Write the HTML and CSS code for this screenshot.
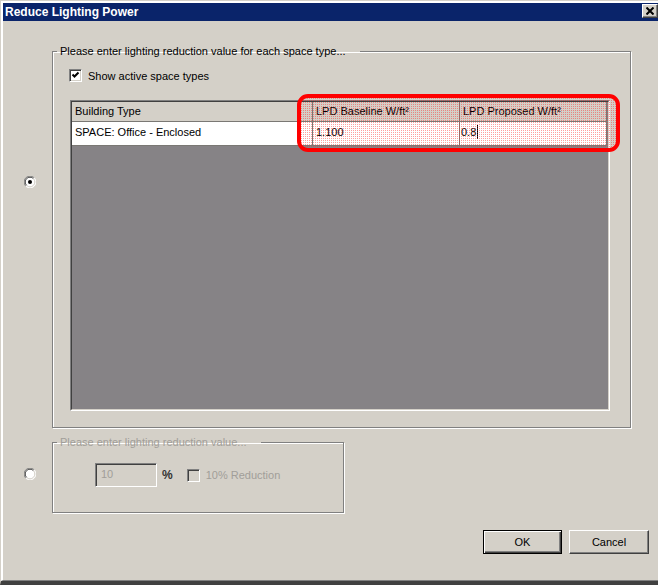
FILE: index.html
```html
<!DOCTYPE html>
<html>
<head>
<meta charset="utf-8">
<title>Reduce Lighting Power</title>
<link rel="stylesheet" href="styles.css">
</head>
<body>
<div class="window">
  <div class="frame">
    <div class="titlebar">
      <span class="title">Reduce Lighting Power</span>
      <span class="close"><svg width="8" height="8" viewBox="0 0 8 8"><path d="M0.5 0.5 L7.5 7.5 M7.5 0.5 L0.5 7.5" stroke="#000" stroke-width="2" fill="none"/></svg></span>
    </div>
    <div class="client">
      <div class="option-row">
        <span class="radio radio-a"><svg width="12" height="12" viewBox="0 0 12 12"><circle cx="6" cy="6" r="5.5" fill="#fff"/><path d="M1.8 10.2 A5.5 5.5 0 0 1 10.2 1.8" stroke="#808080" stroke-width="1" fill="none"/><path d="M2.6 9.4 A4.6 4.6 0 0 1 9.4 2.6" stroke="#404040" stroke-width="1" fill="none"/><path d="M10.2 1.8 A5.5 5.5 0 0 1 1.8 10.2" stroke="#fff" stroke-width="1" fill="none"/><path d="M9.4 2.6 A4.6 4.6 0 0 1 2.6 9.4" stroke="#d4d0c8" stroke-width="1" fill="none"/><circle cx="6" cy="6" r="2" fill="#000"/></svg></span>
        <fieldset class="group group-a">
          <legend class="legend-a">Please enter lighting reduction value for each space type...</legend>
          <div class="check-row">
            <span class="checkbox"><svg width="9" height="9" viewBox="0 0 9 9"><path d="M1.5 3.5 L3.5 5.5 L7.5 1.5" stroke="#000" stroke-width="2" fill="none"/></svg></span>
            <span class="check-label">Show active space types</span>
          </div>
          <div class="grid">
            <div class="grid-inner">
              <div class="grid-row head">
                <div class="cell c1">Building Type</div>
                <div class="cell c2">LPD Baseline W/ft²</div>
                <div class="cell c3">LPD Proposed W/ft²</div>
              </div>
              <div class="grid-row data">
                <div class="cell c1">SPACE: Office - Enclosed</div>
                <div class="cell c2">1.100</div>
                <div class="cell c3 editing">0.8<span class="caret"></span></div>
              </div>
            </div>
          </div>
        </fieldset>
      </div>
      <div class="option-row row-b">
        <span class="radio radio-b"><svg width="12" height="12" viewBox="0 0 12 12"><circle cx="6" cy="6" r="5.5" fill="#fff"/><path d="M1.8 10.2 A5.5 5.5 0 0 1 10.2 1.8" stroke="#808080" stroke-width="1" fill="none"/><path d="M2.6 9.4 A4.6 4.6 0 0 1 9.4 2.6" stroke="#404040" stroke-width="1" fill="none"/><path d="M10.2 1.8 A5.5 5.5 0 0 1 1.8 10.2" stroke="#fff" stroke-width="1" fill="none"/><path d="M9.4 2.6 A4.6 4.6 0 0 1 2.6 9.4" stroke="#d4d0c8" stroke-width="1" fill="none"/></svg></span>
        <fieldset class="group group-b">
          <legend class="legend-b">Please enter lighting reduction value...</legend>
          <div class="value-row">
            <span class="textbox">10</span>
            <span class="percent">%</span>
            <span class="checkbox disabled"></span>
            <span class="disabled-label">10% Reduction</span>
          </div>
        </fieldset>
      </div>
      <div class="buttons">
        <span class="btn btn-default">OK</span>
        <span class="btn btn-cancel">Cancel</span>
      </div>
    </div>
  </div>
  <div class="highlight"></div>
</div>
</body>
</html>
```
FILE: styles.css
```css
html, body {
  margin: 0;
  background: #d4d0c8;
}
body {
  font-family: "Liberation Sans", Arial, sans-serif;
  font-size: 11px;
  color: #000;
}
.window {
  position: relative;
  width: 658px;
  height: 585px;
  box-sizing: border-box;
  border-top: 1px solid #d4d0c8;
  border-left: 1px solid #d4d0c8;
  border-bottom: 4px solid #404040;
  display: flex;
  flex-direction: column;
  overflow: hidden;
  background: #d4d0c8;
}
.frame {
  flex: 1;
  min-height: 0;
  display: flex;
  flex-direction: column;
  border-top: 2px solid #fff;
  border-left: 2px solid #fff;
  border-bottom: 1px solid #808080;
}
.titlebar {
  height: 18px;
  flex: none;
  background: #0a246a;
  color: #fff;
  display: flex;
  justify-content: space-between;
  align-items: flex-start;
  padding-left: 2px;
  font: bold 12px/18px "Liberation Sans", Arial, sans-serif;
}
.close {
  margin-top: 1px;
  width: 16px;
  height: 14px;
  box-sizing: border-box;
  background: #d4d0c8;
  border-top: 1px solid #fff;
  border-left: 1px solid #fff;
  border-right: 1px solid #404040;
  border-bottom: 1px solid #404040;
  box-shadow: inset -1px -1px 0 #808080;
  display: flex;
  align-items: center;
  justify-content: center;
}
.close svg {
  display: block;
}
.client {
  flex: 1;
  display: flex;
  flex-direction: column;
  padding: 24px 9px 0 0;
}
.option-row {
  display: grid;
  grid-template-columns: 49px auto;
  align-items: start;
}
.row-b {
  margin-top: 8px;
}
.radio {
  display: block;
  width: 12px;
  height: 12px;
  margin-left: 21px;
}
.radio svg {
  display: block;
}
.radio-a {
  margin-top: 131px;
}
.radio-b {
  margin-top: 32px;
}
.group {
  margin: 0;
  min-width: 0;
  box-sizing: border-box;
  border: 1px solid #808080;
  box-shadow: inset 1px 1px 0 #fff, 1px 1px 0 #fff;
}
.group legend {
  font-size: 11px;
  line-height: 13px;
  padding: 0 14px 0 3px;
}
.group-a {
  width: 579px;
  padding: 11px 20px 16px 16px;
}
.legend-a {
  margin-left: -12px;
}
.group-b {
  width: 292px;
  padding: 14px 0 25px 42px;
}
.legend-b {
  margin-left: -38px;
  color: #a19e99;
}
.check-row {
  display: flex;
  align-items: center;
  height: 13px;
}
.checkbox {
  width: 13px;
  height: 13px;
  box-sizing: border-box;
  border: 1px solid;
  border-color: #808080 #fff #fff #808080;
  box-shadow: inset 1px 1px 0 #404040, inset -1px -1px 0 #d4d0c8;
  background: #fff;
  display: flex;
  align-items: center;
  justify-content: center;
  flex: none;
}
.checkbox svg {
  display: block;
}
.checkbox.disabled {
  background: #d4d0c8;
}
.check-label {
  margin-left: 6px;
}
.grid {
  margin: 18px 0 0 1px;
  width: 540px;
  height: 311px;
  box-sizing: border-box;
  border: 1px solid;
  border-color: #808080 #fff #fff #808080;
  background: #868386;
}
.grid-inner {
  height: 100%;
  box-sizing: border-box;
  border: 1px solid;
  border-color: #404040 #d4d0c8 #d4d0c8 #404040;
}
.grid-row {
  display: flex;
}
.cell {
  box-sizing: border-box;
  border-right: 1px solid #7a7874;
  border-bottom: 1px solid #7a7874;
  padding-left: 3px;
  white-space: nowrap;
  overflow: hidden;
}
.c1 {
  width: 241px;
}
.c2, .c3 {
  width: 147px;
}
.head .cell {
  height: 20px;
  line-height: 19px;
  background: #d4d0c8;
}
.data .cell {
  height: 24px;
  line-height: 21px;
  background: #fff;
}
.data .editing {
  padding-left: 1px;
}
.caret {
  display: inline-block;
  width: 1px;
  height: 14px;
  background: #000;
  vertical-align: -3px;
  margin-left: 1px;
}
.value-row {
  display: flex;
  align-items: center;
  height: 24px;
}
.textbox {
  width: 62px;
  height: 24px;
  box-sizing: border-box;
  border: 1px solid;
  border-color: #808080 #fff #fff #808080;
  box-shadow: inset 1px 1px 0 #404040, inset -1px -1px 0 #d4d0c8;
  background: #d4d0c8;
  color: #a19e99;
  padding-left: 5px;
  line-height: 20px;
}
.percent {
  margin-left: 5px;
  font-size: 12px;
  font-weight: bold;
  color: #333;
}
.value-row .checkbox {
  margin-left: 14px;
}
.disabled-label {
  margin-left: 6px;
  color: #a19e99;
}
.buttons {
  display: flex;
  justify-content: flex-end;
  gap: 7px;
  margin-top: 17px;
}
.btn {
  height: 24px;
  box-sizing: border-box;
  background: #d4d0c8;
  display: flex;
  align-items: center;
  justify-content: center;
}
.btn-default {
  width: 79px;
  border: 1px solid #000;
  box-shadow: inset 1px 1px 0 #fff, inset -1px -1px 0 #404040, inset -2px -2px 0 #808080;
}
.btn-cancel {
  width: 80px;
  border-top: 1px solid #fff;
  border-left: 1px solid #fff;
  border-right: 1px solid #404040;
  border-bottom: 1px solid #404040;
  box-shadow: inset -1px -1px 0 #808080;
}
.highlight {
  position: absolute;
  left: 296px;
  top: 93px;
  width: 323px;
  height: 58px;
  box-sizing: border-box;
  border: 4px solid #ff0000;
  border-radius: 11px;
  background: conic-gradient(at 1px 1px, transparent 75%, rgba(255, 40, 40, 0.45) 0) 0 0 / 2px 2px;
  background-clip: padding-box;
}
```
